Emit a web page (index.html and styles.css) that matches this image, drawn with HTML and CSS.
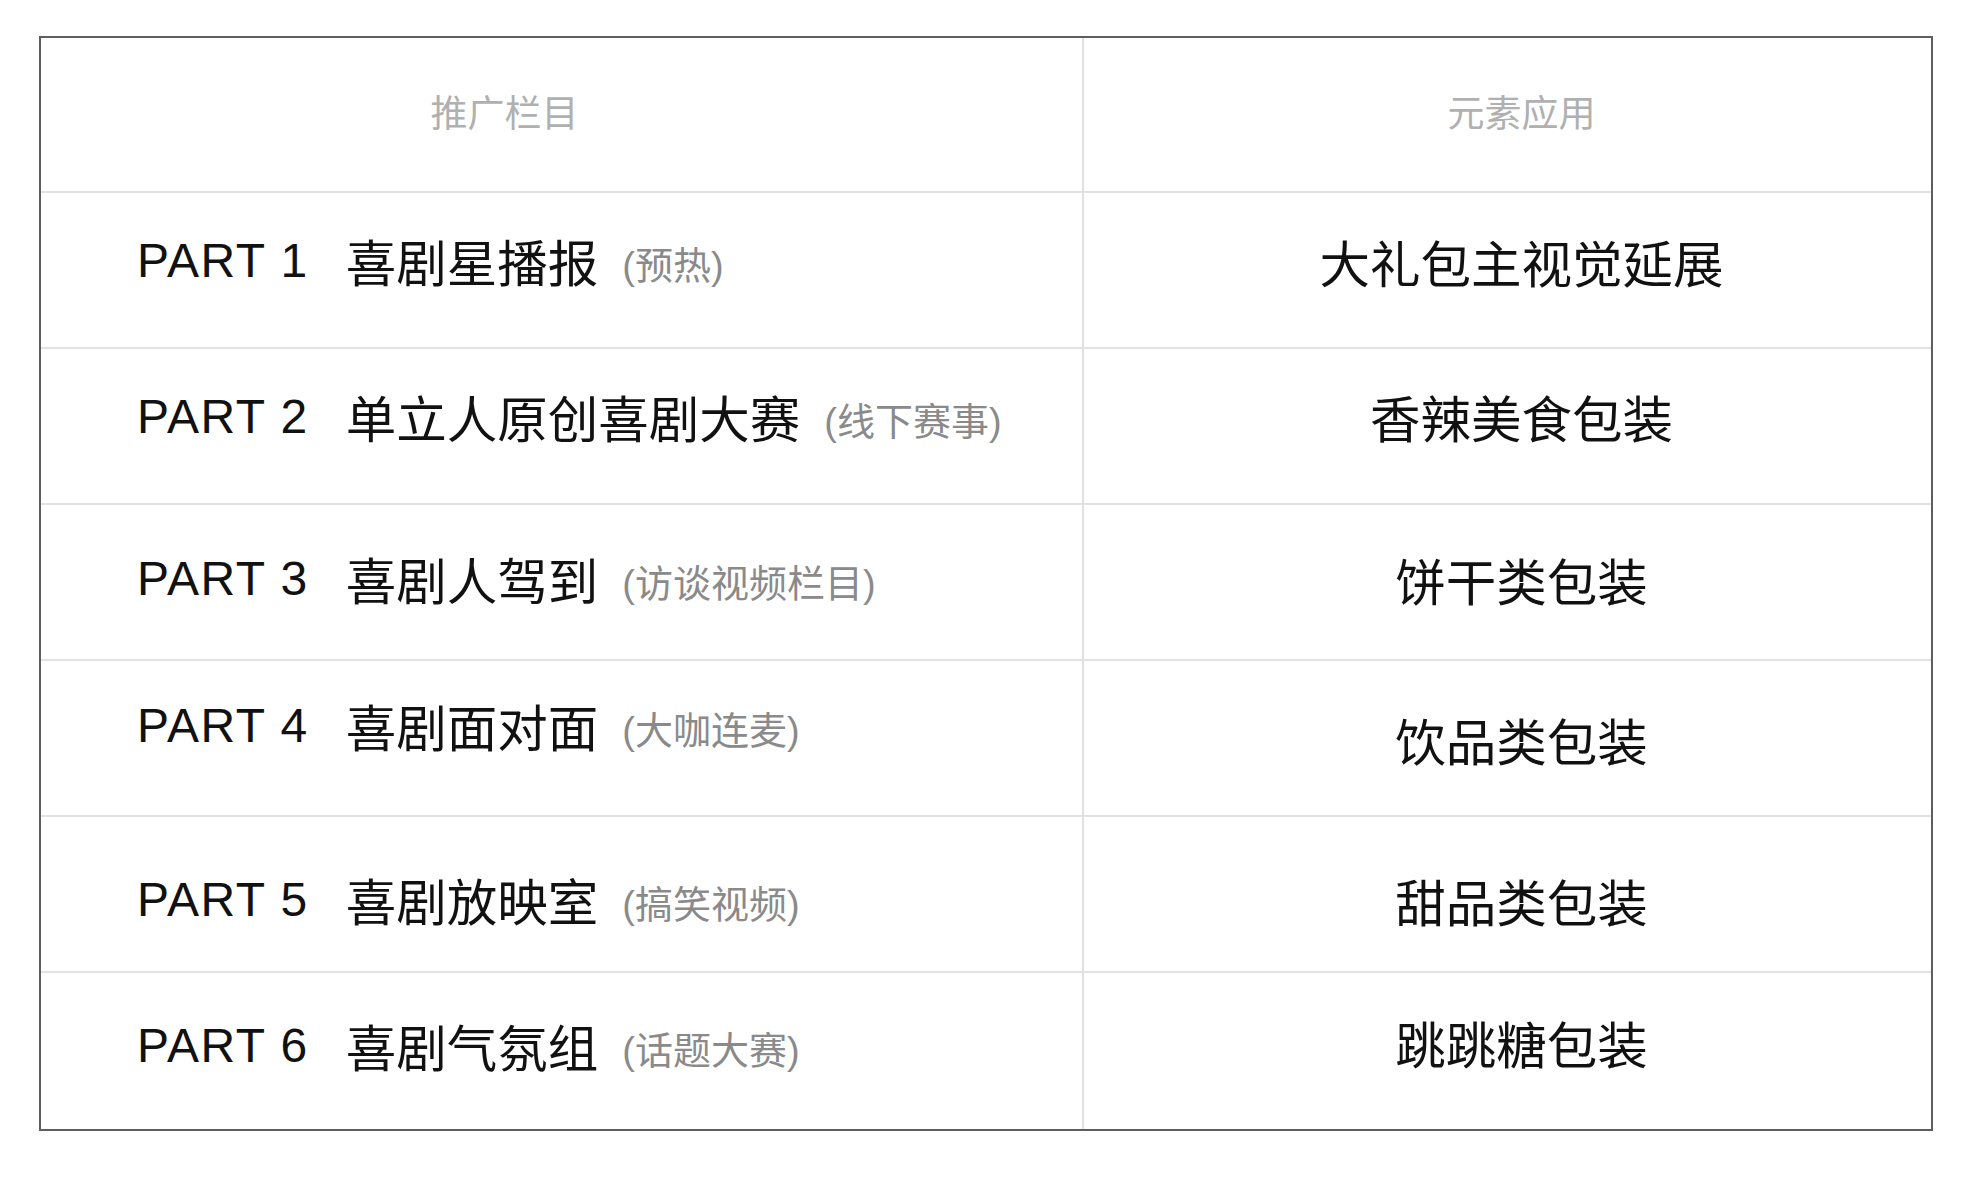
FILE: index.html
```html
<!DOCTYPE html>
<html lang="zh-CN">
<head>
<meta charset="utf-8">
<link rel="stylesheet" href="styles.css">
</head>
<body>
<div class="table">
  <div class="cell head left">推广栏目</div>
  <div class="cell head right">元素应用</div>

  <div class="cell left l1"><span class="part">PART 1</span><span class="name">喜剧星播报</span><span class="note">(预热)</span></div>
  <div class="cell right r1">大礼包主视觉延展</div>

  <div class="cell left l2"><span class="part">PART 2</span><span class="name">单立人原创喜剧大赛</span><span class="note">(线下赛事)</span></div>
  <div class="cell right r2">香辣美食包装</div>

  <div class="cell left l3"><span class="part">PART 3</span><span class="name">喜剧人驾到</span><span class="note">(访谈视频栏目)</span></div>
  <div class="cell right r3">饼干类包装</div>

  <div class="cell left l4"><span class="part">PART 4</span><span class="name">喜剧面对面</span><span class="note">(大咖连麦)</span></div>
  <div class="cell right r4">饮品类包装</div>

  <div class="cell left l5"><span class="part">PART 5</span><span class="name">喜剧放映室</span><span class="note">(搞笑视频)</span></div>
  <div class="cell right r5">甜品类包装</div>

  <div class="cell left l6 last"><span class="part">PART 6</span><span class="name">喜剧气氛组</span><span class="note">(话题大赛)</span></div>
  <div class="cell right r6 last">跳跳糖包装</div>
</div>
</body>
</html>
```

FILE: styles.css
```css
html, body {
  margin: 0;
  padding: 0;
  background: #ffffff;
}
body {
  padding: 36px 0 0 39px;
  font-family: "Liberation Sans", "Noto Sans CJK SC", sans-serif;
  color: #111111;
}
.table {
  display: grid;
  grid-template-columns: 1043px 847px;
  grid-template-rows: 155px repeat(6, 156px);
  width: 1890px;
  border: 2px solid #5e5e5e;
}
.cell {
  display: flex;
  align-items: center;
  border-bottom: 2px solid #e2e2e2;
  box-sizing: border-box;
}
.cell.last {
  border-bottom: none;
}
.left {
  border-right: 2px solid #e0e0e0;
  padding-left: 96px;
}
.right {
  justify-content: center;
  padding-left: 28px;
  font-size: 50.5px;
}
.head {
  font-size: 37px;
  color: #b0b0b0;
  padding-bottom: 8px;
}
.head.left {
  justify-content: center;
  padding-left: 0;
  padding-right: 114px;
}
.l1, .l2 { padding-bottom: 20px; }
.l3 { padding-bottom: 8px; }
.l4 { padding-bottom: 26px; }
.l5 { padding-top: 10px; }
.l6 { padding-bottom: 12px; }
.r1 { padding-bottom: 18px; }
.r2 { padding-bottom: 20px; }
.r3 { padding-bottom: 6px; }
.r4 { padding-top: 2px; }
.r5 { padding-top: 12px; }
.r6 { padding-bottom: 18px; }
.part {
  font-size: 48px;
  letter-spacing: 1.5px;
  margin-right: 37px;
  white-space: pre;
}
.name {
  font-size: 50.5px;
  margin-right: 24px;
}
.note {
  font-size: 38px;
  color: #8a8a8a;
  padding-top: 4px;
}
```
